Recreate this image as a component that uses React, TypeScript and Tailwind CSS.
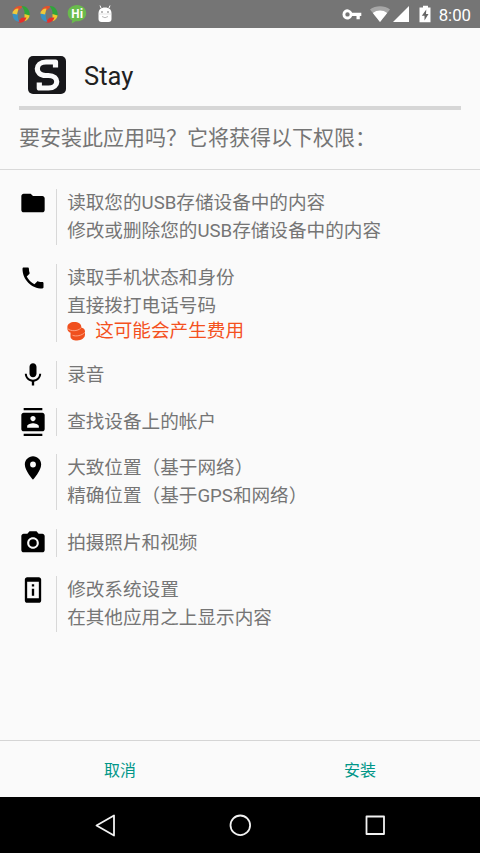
import type { ReactNode } from "react";
import type { IconType } from "react-icons";
import {
  MdFolder,
  MdPhone,
  MdMic,
  MdContacts,
  MdLocationOn,
  MdPhotoCamera,
  MdPermDeviceInformation,
} from "react-icons/md";

function Swirl() {
  return (
    <svg className="h-5 w-5" viewBox="0 0 20 20">
      <path d="M2 7.500C3 3.200 7 1 12 2.500L7.500 6.500z" fill="#e2512e" />
      <path d="M10.500 2C15.500 1.500 19.500 6 18.700 12.500L13.500 11C14 8 13 5 10.500 2z" fill="#2fa53a" />
      <path d="M18.700 11.500C18 14.500 16 16.500 13.500 17.200L13.500 10z" fill="#efc82e" />
      <path d="M15.500 13.500C14 18 10.500 19.700 6.500 18L10.500 13.700z" fill="#e5302c" />
      <path d="M8.500 18C3 17.500.7 12.500 2 7.500L7 10C6.500 13 7 15.500 8.500 18z" fill="#3a93c2" />
      <path d="M1.200 9.500C2 6.500 3.800 4.500 7.500 4.500L6 10.500z" fill="#f0c93a" />
    </svg>
  );
}

function Coins() {
  return (
    <svg className="h-5 w-[19px] shrink-0" viewBox="0 0 19 20">
      <g fill="#f0501e">
        <path d="M3.500 12.500C4 9.500 8 6.500 12.500 6.500c3.500 0 5.500 1.400 5.500 3.800v3.500c0 3-3.500 5.700-8 5.700-4 0-6.500-1.500-6.500-4z" />
        <path d="M.4 5.700C.4 3 3.500.9 7.300.9c4 0 7 2 7 4.800v2c0 2.900-3 4.700-7 4.700-3.800 0-6.900-1.800-6.900-4.700z" />
      </g>
      <path d="M.8 7.600c2.500 2.800 10 2.900 13-.5M5.500 14.300c3.500 1.400 9.500.4 12.500-3" fill="none" stroke="#ffb499" strokeWidth=".8" />
    </svg>
  );
}

function StatusBar() {
  return (
    <header className="flex h-7 shrink-0 items-center bg-[#757575] text-white">
      <div className="flex items-center pl-[11px]">
        <Swirl />
        <div className="ml-2"><Swirl /></div>
        <svg className="ml-2 h-5 w-5" viewBox="0 0 20 20">
          <path d="M10 1C4.500 1 .7 4.600.7 9.300c0 3.200 1.800 5.900 4.600 7.200L4.600 19.500l4-2.200C14.500 17.800 19.200 14.400 19.200 9.300 19.200 4.600 15.500 1 10 1z" fill="#69bb4c" />
          <text x="4" y="13.500" fontFamily="Open Sans, sans-serif" fontSize="11.500" fontWeight="700" fill="#fff">Hi</text>
        </svg>
        <svg className="ml-[10px] h-5 w-4" viewBox="0 0 16 20">
          <path d="M4 4 3 1.500M12 4l1-2.500" stroke="#fff" strokeWidth="1" />
          <path d="M1.500 9.500C1.500 5.500 4 3.500 8 3.500s6.500 2 6.500 6V15a3 3 0 0 1-3 3h-7a3 3 0 0 1-3-3z" fill="#fff" />
          <path d="M1.500 10h13" stroke="#d5d5d5" strokeWidth=".6" />
          <circle cx="5" cy="8" r=".8" fill="#666" />
          <circle cx="11" cy="8" r=".8" fill="#666" />
          <path d="M5 12.500q3 2.500 6 0" stroke="#bbb" fill="none" />
        </svg>
      </div>
      <div className="ml-auto flex items-center pr-[9px]">
        <svg className="h-5 w-5" viewBox="0 0 20 20">
          <path fillRule="evenodd" clipRule="evenodd" d="M10.200 12A5 5 0 1 1 10.200 8.800H19.300V12H17.800V15.200H14.500V12zM5.500 8.200a2.200 2.200 0 1 0 0 4.400 2.200 2.200 0 0 0 0-4.400z" fill="#fff" />
        </svg>
        <svg className="ml-2 h-5 w-5" viewBox="0 0 20 20">
          <path d="M0 5.500C5.500 1.200 14.500 1.200 20 5.500L10 18z" fill="#a7a7a7" />
          <path d="M2.800 9C7 5.700 13 5.700 17.200 9L10 18z" fill="#fff" />
        </svg>
        <svg className="ml-[2px] h-5 w-[18px]" viewBox="0 0 18 20">
          <path d="M1 18 17 2v16z" fill="#fff" />
        </svg>
        <svg className="ml-[5px] h-5 w-5" viewBox="0 0 20 20">
          <path d="M8 1.800h5v1.700h2.500V18.200h-11V3.500H8z" fill="#fff" />
          <path d="M11.300 5.500 6.800 11.800h2.700V16.500l4-6.500h-2.500z" fill="#666" />
        </svg>
        <span className="ml-[4px] mt-[2px] text-[16.800px] leading-7">8:00</span>
      </div>
    </header>
  );
}

function Group({ icon: Icon, lines, children }: { icon: IconType; lines: string[]; children?: ReactNode }) {
  return (
    <li className="flex">
      <Icon className="h-7 w-7 shrink-0 text-black" />
      <div className="ml-[9.500px] border-l border-[#d8d8d8] pl-[10px] text-[18.630px] text-[#757575]">
        {lines.map((line) => (
          <p key={line} className="h-7 whitespace-nowrap leading-[28.500px]">{line}</p>
        ))}
        {children}
      </div>
    </li>
  );
}

export default function App() {
  return (
    <div lang="zh-CN" className="flex h-[853px] w-[480px] flex-col overflow-hidden bg-[#fafafa] font-[Roboto,'Noto_Sans_CJK_SC',sans-serif]">
      <StatusBar />
      <section className="h-[142px] shrink-0 border-b border-[#d9d9d9] px-[19px] pt-[27px]">
        <div className="flex h-10 items-center pl-[9px]">
          <svg className="h-[38px] w-[38px]" viewBox="0 0 38 38">
            <rect width="38" height="38" rx="5" fill="#17171a" />
            <path d="M27.500 11.500V6H18C6.500 6 6.500 19.500 17.500 19.500H20.500C31.500 19.500 31.500 32 20.500 32H11.300V26.500" fill="none" stroke="#fafafa" strokeWidth="5.200" strokeLinejoin="round" />
          </svg>
          <h1 className="ml-[18px] mt-[2px] text-[25.500px] leading-10 text-[#212121]">Stay</h1>
        </div>
        <div className="mt-[11px] h-[4px] bg-[#d6d6d6]" />
        <p className="mt-[13px] whitespace-nowrap text-[21px] leading-[31px] text-[#757575]">要安装此应用吗？它将获得以下权限：</p>
      </section>
      <ul className="flex flex-1 flex-col gap-[18.670px] pl-[18.670px] pt-[19px]">
        <Group icon={MdFolder} lines={["读取您的USB存储设备中的内容", "修改或删除您的USB存储设备中的内容"]} />
        <Group icon={MdPhone} lines={["读取手机状态和身份", "直接拨打电话号码"]}>
          <div className="flex h-[22.800px] items-center text-[#f4511e]">
            <Coins />
            <span className="ml-[9px] leading-[22px]">这可能会产生费用</span>
          </div>
        </Group>
        <Group icon={MdMic} lines={["录音"]} />
        <Group icon={MdContacts} lines={["查找设备上的帐户"]} />
        <Group icon={MdLocationOn} lines={["大致位置（基于网络）", "精确位置（基于GPS和网络）"]} />
        <Group icon={MdPhotoCamera} lines={["拍摄照片和视频"]} />
        <Group icon={MdPermDeviceInformation} lines={["修改系统设置", "在其他应用之上显示内容"]} />
      </ul>
      <div className="grid h-[57px] shrink-0 grid-cols-2 border-t border-[#d5d5d5] text-base text-[#009688]">
        <button className="pt-[3px]">取消</button>
        <button className="pt-[3px]">安装</button>
      </div>
      <nav className="flex h-14 shrink-0 items-center justify-between bg-black px-[93px]">
        <svg className="h-6 w-6" viewBox="0 0 24 24" fill="none" stroke="#f2f2f2" strokeWidth="1.800" strokeLinejoin="round">
          <path d="M3.500 12.500 21 2.500v20z" />
        </svg>
        <svg className="h-6 w-6" viewBox="0 0 24 24" fill="none" stroke="#f2f2f2" strokeWidth="1.800">
          <circle cx="12.300" cy="12.300" r="9.800" />
        </svg>
        <svg className="h-6 w-6" viewBox="0 0 24 24" fill="none" stroke="#f2f2f2" strokeWidth="1.800" strokeLinejoin="round">
          <path d="M3.500 3.500h17.500v17.500H3.500z" />
        </svg>
      </nav>
    </div>
  );
}
